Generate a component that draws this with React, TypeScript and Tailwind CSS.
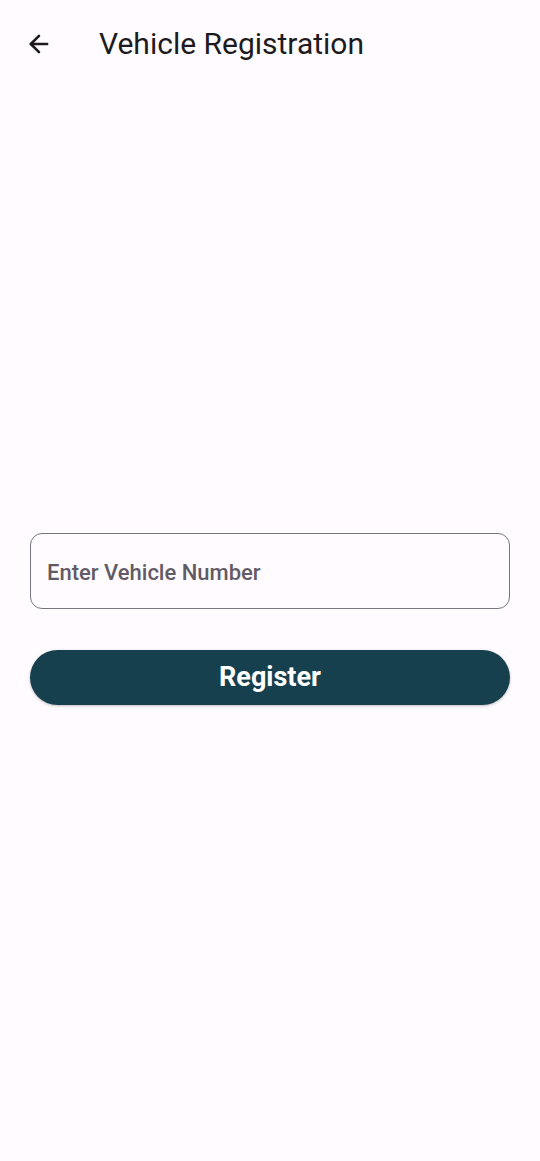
import { ArrowLeft } from 'lucide-react';

export default function App() {
  return (
    <div
      className="min-h-[1161px] w-[540px] bg-[#fffbfe] text-[#1d1b20]"
      style={{ fontFamily: 'Roboto, "Liberation Sans", sans-serif' }}
    >
      <header className="h-[88px] flex items-center px-[25px]">
        <ArrowLeft size={28} strokeWidth={2.2} className="text-[#1d1b20]" />
        <h1 className="ml-[46px] text-[30px] font-normal leading-none">
          Vehicle Registration
        </h1>
      </header>

      <main className="px-[30px] pt-[445px]">
        <div className="h-[76px] rounded-[12px] border border-[#79747e] flex items-center px-[16px] pt-[2px]">
          <input
            placeholder="Enter Vehicle Number"
            className="w-full bg-transparent outline-none text-[22px] font-medium text-[#1d1b20] placeholder:text-[#625b66]"
          />
        </div>

        <button className="mt-[41px] h-[55px] w-full rounded-full bg-[#17404f] text-white text-[27px] font-bold shadow-[0_1px_3px_rgba(0,0,0,0.25)]">
          Register
        </button>
      </main>
    </div>
  );
}
